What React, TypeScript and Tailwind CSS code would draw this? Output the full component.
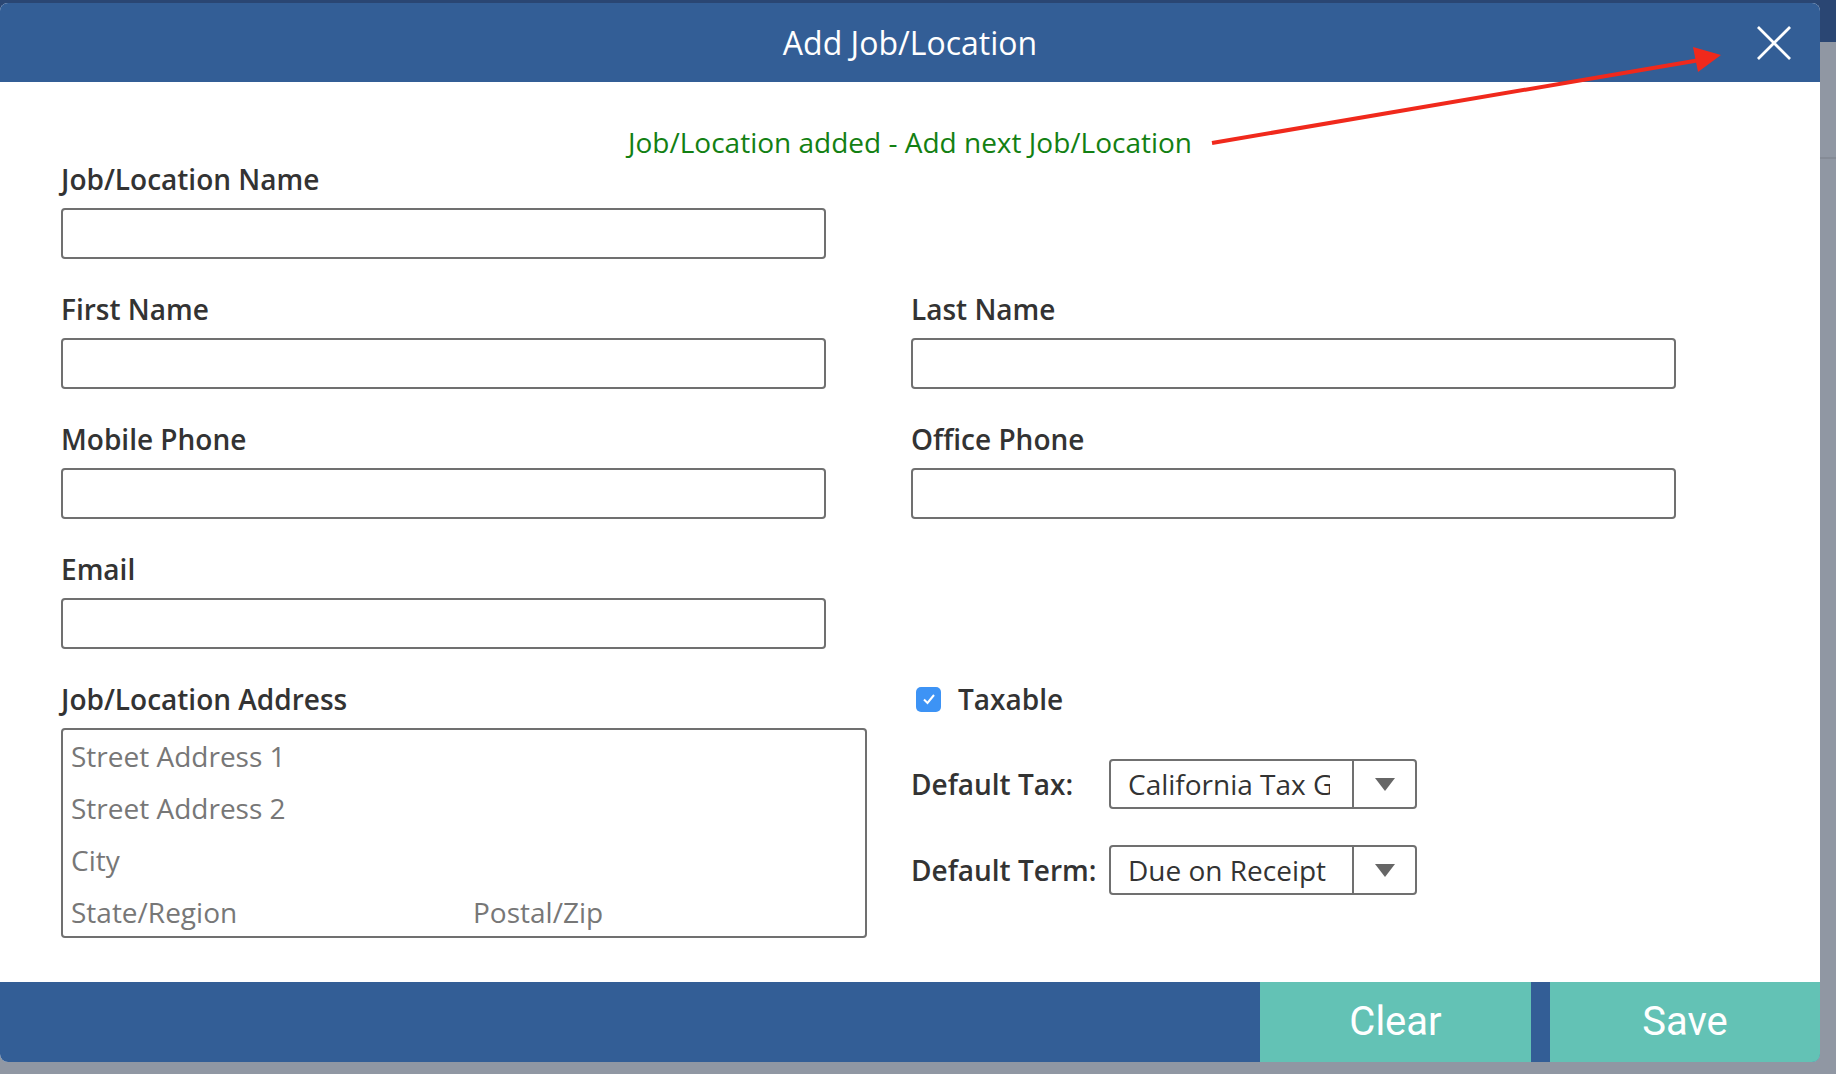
import React from "react";

const labelCls =
  "block text-[28px] leading-[32px] font-semibold text-[#333333] [font-family:'Open_Sans',sans-serif]";
const inputCls =
  "block w-[765px] h-[51px] rounded-[4px] border-2 border-[#707070] bg-white";

type FieldProps = { label: string };

const Field = ({ label }: FieldProps) => (
  <div className="flex flex-col">
    <label className={labelCls}>{label}</label>
    <div className={`mt-[13px] ${inputCls}`} />
  </div>
);

const SelectBox = ({ value }: { value: string }) => (
  <div className="flex h-[50px] w-[308px] rounded-[4px] border-2 border-[#707070] bg-white">
    <div className="flex w-[243px] items-center border-r-2 border-[#707070] pl-[17px] pr-[22px]">
      <span className="overflow-hidden whitespace-nowrap text-[28px] leading-[40px] text-[#333333] [font-family:'Open_Sans',sans-serif]">
        {value}
      </span>
    </div>
    <div className="flex flex-1 items-center justify-center">
      <svg width="20" height="13" viewBox="0 0 20 13">
        <path d="M0 0 L20 0 L10 13 Z" fill="#666666" />
      </svg>
    </div>
  </div>
);

const App = () => {
  return (
    <div className="relative h-[1074px] w-[1836px] overflow-hidden bg-[#9097a3]">
      {/* page behind the modal */}
      <div className="h-[42px] w-full bg-[#2a4673]" />
      <div className="mt-[115px] h-[2px] w-full bg-[#858b96]" />

      {/* modal */}
      <div className="absolute left-0 top-[3px] flex h-[1059px] w-[1820px] flex-col overflow-hidden rounded-[8px] bg-white">
        <div className="relative flex h-[79px] shrink-0 items-center justify-center bg-[#335e96]">
          <h1 className="text-[32px] leading-[40px] text-white [font-family:'Open_Sans',sans-serif]">
            Add Job/Location
          </h1>
          <button className="absolute right-[29px] top-[23px] flex h-[34px] w-[34px] items-center justify-center">
            <svg width="36" height="36" viewBox="0 0 36 36">
              <path
                d="M1 1 L35 35 M35 1 L1 35"
                stroke="white"
                strokeWidth="3"
                fill="none"
              />
            </svg>
          </button>
        </div>

        <div className="relative flex-1 pl-[61px]">
          <p className="-ml-[61px] mt-[44px] text-center text-[28px] leading-[32px] text-[#138013] [font-family:'Open_Sans',sans-serif]">
            Job/Location added - Add next Job/Location
          </p>

          <div className="mt-[5px] grid grid-cols-[765px_765px] gap-x-[85px] gap-y-[34px]">
            <Field label="Job/Location Name" />
            <div />
            <Field label="First Name" />
            <Field label="Last Name" />
            <Field label="Mobile Phone" />
            <Field label="Office Phone" />
            <Field label="Email" />
            <div />
          </div>

          <div className="mt-[34px] flex">
            <div className="flex w-[850px] flex-col">
              <label className={labelCls}>Job/Location Address</label>
              <div className="mt-[13px] h-[210px] w-[806px] rounded-[4px] border-2 border-[#707070] pl-[8px] text-[28px] leading-[52px] text-[#777777] [font-family:'Open_Sans',sans-serif]">
                <div>Street Address 1</div>
                <div>Street Address 2</div>
                <div>City</div>
                <div className="flex">
                  <span className="w-[402px]">State/Region</span>
                  <span>Postal/Zip</span>
                </div>
              </div>
            </div>

            <div className="flex flex-col">
              <div className="flex h-[32px] items-center pl-[5px]">
                <span className="flex h-[25px] w-[25px] items-center justify-center rounded-[5px] bg-[#3d93f5]">
                  <svg width="16" height="16" viewBox="0 0 16 16">
                    <path
                      d="M3 8.5 L6.5 12 L13 4"
                      stroke="white"
                      strokeWidth="2"
                      fill="none"
                    />
                  </svg>
                </span>
                <span className={`ml-[17px] ${labelCls}`}>Taxable</span>
              </div>

              <div className="mt-[44px] flex items-center">
                <span className={`w-[198px] ${labelCls}`}>Default Tax:</span>
                <SelectBox value="California Tax Group" />
              </div>
              <div className="mt-[36px] flex items-center">
                <span className={`w-[198px] ${labelCls}`}>Default Term:</span>
                <SelectBox value="Due on Receipt" />
              </div>
            </div>
          </div>

          {/* arrow annotation */}
          <svg
            className="pointer-events-none absolute left-0 -top-[82px]"
            width="1820"
            height="200"
            viewBox="0 0 1820 200"
          >
            <line x1="1212" y1="143" x2="1700" y2="60" stroke="#f0291c" strokeWidth="4" />
            <path d="M1693 47 L1721 55 L1698 72 Z" fill="#f0291c" />
          </svg>
        </div>

        <div className="flex h-[80px] shrink-0 justify-end bg-[#335e96]">
          <button className="w-[271px] bg-[#63c2b5] text-[40px] text-white [font-family:Roboto,sans-serif]">
            Clear
          </button>
          <div className="w-[19px]" />
          <button className="w-[270px] bg-[#63c2b5] text-[40px] text-white [font-family:Roboto,sans-serif]">
            Save
          </button>
        </div>
      </div>
    </div>
  );
};

export default App;
